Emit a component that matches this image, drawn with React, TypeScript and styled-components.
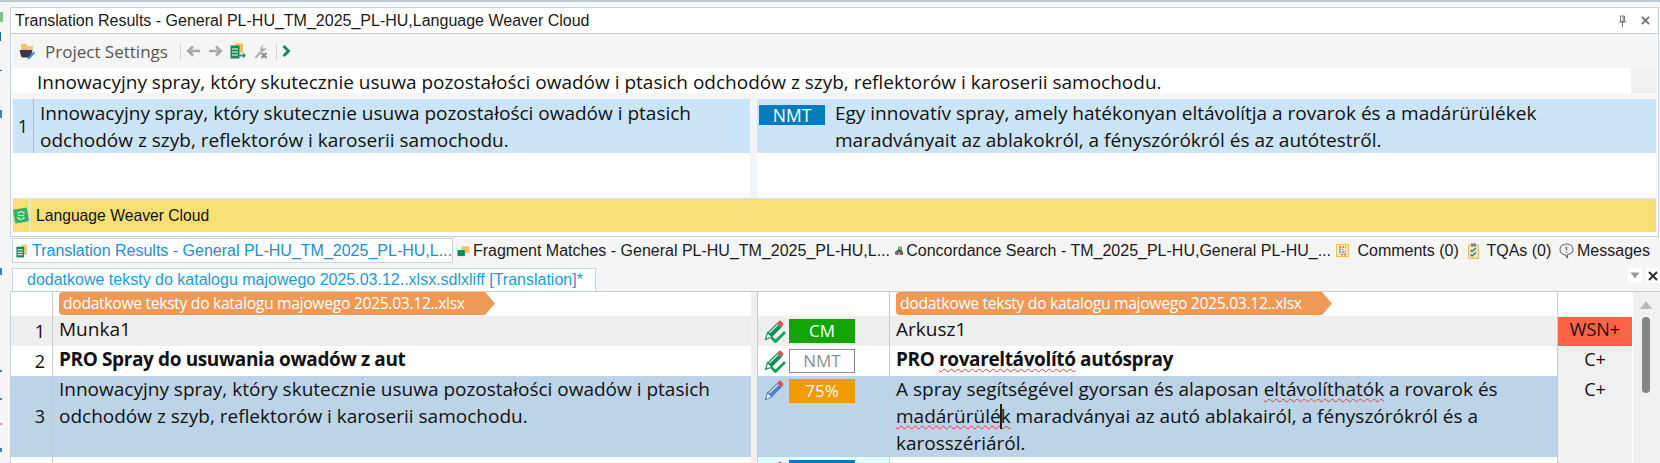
import React from "react";
import styled, { createGlobalStyle } from "styled-components";

const GlobalStyle = createGlobalStyle`
  html, body { margin: 0; padding: 0; background: #f5f5f5; }
  * { box-sizing: border-box; }
`;

const uiFont = `"Open Sans", "Noto Sans", sans-serif`;
const tabFont = `"Liberation Sans", Arial, sans-serif`;
const line = "#c6d3da";

const Page = styled.div`
  width: 1660px;
  height: 463px;
  overflow: hidden;
  display: flex;
  background: #f5f5f5;
  border-top: 2px solid #bcc9d3;
  color: #111;
`;

const Sliver = styled.div`
  width: 10px;
  flex: none;
`;

const Main = styled.div`
  width: 1650px;
  display: flex;
  flex-direction: column;
`;

/* ---------- top panel ---------- */
const Panel = styled.section`
  margin-top: 5px;
  width: 1649px;
  height: 230px;
  background: #fff;
  border: 1px solid ${line};
  display: flex;
  flex-direction: column;
`;

const TitleBar = styled.header`
  height: 26px;
  flex: none;
  display: flex;
  align-items: center;
  padding: 0 8px 0 4px;
  background: #fff;
  border-bottom: 1px solid ${line};
  font: 16px/1 ${tabFont};
  color: #1a1a1a;
`;

const TitleText = styled.span`
  flex: 1;
`;

const TitleButton = styled.span`
  display: flex;
  margin-left: 14px;
`;

const Toolbar = styled.div`
  height: 34px;
  flex: none;
  display: flex;
  align-items: center;
  padding-left: 7px;
  background: #f5f5f5;
  margin: 0 1px;
`;

const ToolLabel = styled.span`
  font: 17px/1 ${uiFont};
  color: #555;
  margin: 0 10px 0 10px;
`;

const ToolSep = styled.span`
  width: 1px;
  height: 17px;
  background: #d4d4d4;
  margin: 0 5px 0 2px;
`;

const ToolIcon = styled.span<{ $gap?: number }>`
  display: flex;
  margin-right: ${(p) => p.$gap ?? 7}px;
`;

const PanelBody = styled.div`
  margin: 0 1px;
  padding: 0 1px;
  flex: 1;
  display: flex;
  flex-direction: column;
  background: #f5f5f5;
`;

const SourceLine = styled.div`
  height: 25px;
  flex: none;
  display: flex;
  background: #f0f0f0;
  font: 19px/21px ${uiFont};
`;

const SourceText = styled.div`
  width: 1618px;
  padding: 4px 0 0 24px;
  background: #fff;
  white-space: nowrap;
`;

const ResultSpacer = styled.div`
  height: 6px;
  flex: none;
`;

const ResultRow = styled.div`
  height: 54px;
  flex: none;
  display: grid;
  grid-template-columns: 21px 716px 7px 1fr;
  background: #cce4f7;
  font: 19px/26.5px ${uiFont};
`;

const ResultNum = styled.div`
  display: flex;
  align-items: center;
  justify-content: center;
  font-size: 18px;
  border-right: 1px solid #a9b8c4;
`;

const ResultSource = styled.div`
  padding: 1px 0 0 6px;
  white-space: nowrap;
`;

const ResultGap = styled.div`
  background: #f2f4f6;
`;

const ResultTarget = styled.div`
  display: flex;
  padding: 1px 0 0 2px;
  white-space: nowrap;
`;

const NmtTag = styled.span`
  width: 66px;
  height: 20px;
  margin: 5px 10px 0 0;
  flex: none;
  background: #007cba;
  color: #fff;
  text-align: center;
  font-size: 17.5px;
  line-height: 20px;
`;

const ResultBlank = styled.div`
  height: 45px;
  flex: none;
  display: grid;
  grid-template-columns: 737px 7px 1fr;
  background: #fff;
`;

const ProviderBar = styled.div`
  height: 34px;
  flex: none;
  display: flex;
  align-items: center;
  background: #f7df75;
  border-top: 1px solid #d5e3f3;
  font: 15.7px/1 ${tabFont};
`;

const ProviderIcon = styled.span`
  width: 18px;
  height: 100%;
  display: flex;
  align-items: center;
  border-right: 2px solid #dfe5e8;
  margin-right: 5px;
`;

const PanelFoot = styled.div`
  flex: 1;
  background: #fff;
`;

/* ---------- tool tabs ---------- */
const ToolTabs = styled.nav`
  height: 25px;
  margin-top: 1px;
  flex: none;
  display: flex;
  padding-left: 2px;
  font: 16px/1 ${tabFont};
`;

const ToolTab = styled.div<{ $w: number; $active?: boolean }>`
  width: ${(p) => p.$w}px;
  flex: none;
  display: flex;
  align-items: center;
  gap: ${(p) => (p.$active ? 4 : 3)}px;
  padding-left: 3px;
  white-space: nowrap;
  color: ${(p) => (p.$active ? "#1e8ed0" : "#1a1a1a")};
  background: ${(p) => (p.$active ? "#fff" : "transparent")};
  border: 1px solid ${(p) => (p.$active ? line : "transparent")};
`;

/* ---------- document tab ---------- */
const DocBar = styled.div`
  height: 28px;
  flex: none;
  display: flex;
  align-items: flex-end;
  justify-content: space-between;
  padding-left: 2px;
`;

const DocTab = styled.div`
  width: 584px;
  height: 23px;
  background: #fff;
  border: 1px solid ${line};
  border-bottom: none;
  padding-left: 14px;
  font: 16px/21px ${tabFont};
  color: #1e9ad6;
  white-space: nowrap;
`;

const DocButtons = styled.div`
  display: flex;
  gap: 4px;
  align-self: flex-start;
  margin-top: 5px;
`;

const DocButton = styled.span`
  width: 14px;
  height: 15px;
  background: #fff;
  display: flex;
  align-items: center;
  justify-content: center;
`;

/* ---------- editor ---------- */
const Editor = styled.div`
  flex: 1;
  min-height: 0;
  display: flex;
  overflow: hidden;
  border-top: 1px solid #c5d0d8;
  border-left: 1px solid ${line};
`;

const Grid = styled.div`
  width: 1621px;
  flex: none;
  display: flex;
  flex-direction: column;
  background: #fff;
`;

const Row = styled.div<{ $h: number; $bg: string }>`
  height: ${(p) => p.$h}px;
  flex: none;
  display: grid;
  grid-template-columns: 42px 698px 7px 132px 668px 74px;
  background: ${(p) => p.$bg};
  font: 19px/27px ${uiFont};
`;

const NumCell = styled.div`
  display: flex;
  align-items: center;
  justify-content: flex-end;
  padding-right: 7px;
  font-size: 18px;
  border-right: 1px solid #c8cdd2;
`;

const TextCell = styled.div<{ $bold?: boolean }>`
  padding-left: 6px;
  white-space: nowrap;
  font-weight: ${(p) => (p.$bold ? 700 : 400)};
  letter-spacing: ${(p) => (p.$bold ? "-0.38px" : "0")};
`;

const TargetCell = styled(TextCell)`
  border-right: 1px solid #c8cdd2;
`;

const TagHolder = styled.div<{ $left: number; $ruled?: boolean }>`
  padding-left: ${(p) => p.$left}px;
  border-right: ${(p) => (p.$ruled ? "1px solid #c8cdd2" : "none")};
`;

const GapCell = styled.div`
  background: #f0f0f0;
  border-right: 1px solid #c8cdd2;
`;

const StatusCell = styled.div<{ $bg?: string }>`
  display: flex;
  align-items: flex-start;
  gap: 3px;
  padding: 3px 0 0 4px;
  border-right: 1px solid #c8cdd2;
  background: ${(p) => p.$bg ?? "transparent"};
`;

const Badge = styled.span<{ $bg: string; $fg: string; $border?: string }>`
  width: 66px;
  height: 24px;
  flex: none;
  background: ${(p) => p.$bg};
  color: ${(p) => p.$fg};
  border: ${(p) => (p.$border ? `1px solid ${p.$border}` : "none")};
  text-align: center;
  font-size: 17px;
  line-height: ${(p) => (p.$border ? 22 : 24)}px;
`;

const TmCell = styled.div<{ $hot?: boolean; $blank?: boolean }>`
  background: ${(p) => (p.$hot ? "#ff6347" : p.$blank ? "#fff" : "#efefef")};
  border-top: 1px solid ${(p) => (p.$hot ? "#efefef" : "transparent")};
  text-align: center;
  font-size: 18px;
  line-height: 25px;
`;

const Squiggle = styled.span`
  text-decoration: underline wavy #e0403a 1px;
  text-underline-offset: 2px;
`;

const Caret = styled.span`
  position: relative;
  &::after {
    content: "";
    position: absolute;
    left: -1px;
    top: 1px;
    width: 2px;
    height: 25px;
    background: #1c1c1c;
  }
`;

const ScrollRail = styled.div`
  flex: 1;
  background: #f0f0f0;
  border-left: 1px solid #fff;
  display: flex;
  flex-direction: column;
  align-items: center;
  padding: 9px 2px 0 0;
`;

const ScrollArrow = styled.span`
  width: 0;
  height: 0;
  border-left: 6px solid transparent;
  border-right: 6px solid transparent;
  border-bottom: 8px solid #b9b9b9;
`;

const ScrollThumb = styled.span`
  width: 8px;
  height: 76px;
  margin-top: 8px;
  border-radius: 4px;
  background: #858585;
`;

const Tag = styled.span<{ $w: number }>`
  display: block;
  width: ${(p) => p.$w}px;
  height: 23px;
  padding-left: 4px;
  background: #ee9a56;
  color: #fff;
  font: 15.7px/23px ${uiFont};
  letter-spacing: -0.32px;
  white-space: nowrap;
  border-radius: 4px 0 0 4px;
  clip-path: polygon(0 0, calc(100% - 10px) 0, 100% 50%, calc(100% - 10px) 100%, 0 100%);
`;

/* ---------- drawn icons ---------- */
const EdgeMarks = () => (
  <svg width="10" height="461" viewBox="0 0 10 461">
    <rect x="0" y="10" width="3" height="10" fill="#7fc08f" />
    <rect x="0" y="30" width="1" height="9" fill="#1b5fa8" />
    <rect x="0" y="68" width="2" height="1" fill="#1b5fa8" />
    <rect x="0" y="108" width="2" height="8" fill="#4a7fb8" />
    <rect x="0" y="266" width="2" height="7" fill="#4a7fb8" />
    <rect x="0" y="368" width="2" height="2" fill="#4a7fb8" />
    <rect x="0" y="396" width="2" height="2" fill="#4a7fb8" />
    <rect x="0" y="421" width="2" height="2" fill="#e58aa0" />
    <rect x="0" y="446" width="2" height="4" fill="#4a7fb8" />
  </svg>
);

const PencilIcon = ({ color, check }: { color: string; check?: boolean }) => (
  <svg width="24" height="24" viewBox="0 0 24 24">
    <path d="M5.5 13.5 L15 4 L19.5 8.5 L10 18 Z" fill={color} />
    <path d="M7.5 14 L16 5.5" stroke="#fff" strokeWidth="1.1" opacity="0.85" />
    <path d="M5.5 13.5 L10 18 L3.5 20.5 Z" fill="#fff" stroke={color} strokeWidth="1.1" strokeLinejoin="round" />
    <path d="M15 4 L17 2 Q18 1.2 19 2 L21 4.2 Q21.7 5.2 21 6 L19.5 8.5 Z" fill="#d9534f" />
    {check && <path d="M9.5 18.5 L13.5 22.5 L23 13" fill="none" stroke="#11a05a" strokeWidth="2.8" />}
  </svg>
);

const ProjectIcon = () => (
  <svg width="16" height="18" viewBox="0 0 16 18">
    <path d="M2 2 H7 L8.5 4 H14 V8 H2 Z" fill="#f2c66d" />
    <path d="M0.5 8 H13.5 L12 14 Q11.5 15.5 10 15.5 H4 Q2.5 15.5 2 14 Z" fill="#3b3b3b" />
    <path d="M9 15.5 L14.5 9.5 L16 11 L10.5 17 L8.5 17.5 Z" fill="#3f8fd8" />
  </svg>
);

const ArrowIcon = ({ flip }: { flip?: boolean }) => (
  <svg width="15" height="12" viewBox="0 0 15 12" style={flip ? { transform: "scaleX(-1)" } : undefined}>
    <path d="M14 6 H3 M7 1.5 L2.2 6 L7 10.5" fill="none" stroke="#a9a9a9" strokeWidth="2.6" />
  </svg>
);

const SheetIcon = () => (
  <svg width="16" height="16" viewBox="0 0 16 16">
    <rect x="5" y="0.5" width="8" height="9" fill="#efbe5d" />
    <rect x="0.5" y="2.5" width="9" height="13" fill="#12895a" />
    <path d="M2 6 H8 M2 9 H8 M2 12 H8" stroke="#fff" strokeWidth="1.2" />
    <path d="M9 11.5 H13 V9.5 L16 12.5 L13 15.5 V13.5 H9 Z" fill="#3f7fc0" />
  </svg>
);

const WrenchIcon = () => (
  <svg width="15" height="16" viewBox="0 0 15 16">
    <path d="M1.5 14.5 L7.5 7.5 Q6.8 3 11 1.5 L9 4.5 L11 6 L13.5 3.8 Q13 8 9 8.8 L3.5 15.5 Z" fill="#b0b0b0" />
    <path d="M8.5 10 L13.5 15 M13.5 10 L8.5 15" stroke="#8a8a8a" strokeWidth="2" />
  </svg>
);

const ChevronIcon = () => (
  <svg width="9" height="12" viewBox="0 0 9 12">
    <path d="M1.5 1 L6.5 6 L1.5 11" fill="none" stroke="#0f8a5f" strokeWidth="2.8" />
  </svg>
);

const PinIcon = () => (
  <svg width="9" height="12" viewBox="0 0 9 12">
    <path d="M2.5 1 H6.5 V6.5 H2.5 Z M1 7 H8 M4.5 7 V12 M5.2 1 V6.5" fill="none" stroke="#777" strokeWidth="1" />
  </svg>
);

const CloseIcon = ({ color, size }: { color: string; size: number }) => (
  <svg width={size} height={size} viewBox="0 0 10 10">
    <path d="M1 1 L9 9 M9 1 L1 9" stroke={color} strokeWidth="2.2" />
  </svg>
);

const DownIcon = () => (
  <svg width="10" height="7" viewBox="0 0 10 7">
    <path d="M0.5 0.5 H9.5 L5 6.5 Z" fill="#9a9a9a" />
  </svg>
);

const WeaverIcon = () => (
  <svg width="16" height="17" viewBox="0 0 16 17">
    <rect x="1" y="1.5" width="14" height="14" rx="1.5" fill="#35b267" transform="rotate(-10 8 8.5)" />
    <path d="M4.5 7 A4 4 0 0 1 11.5 6.5 M11.5 10 A4 4 0 0 1 4.5 10.5" fill="none" stroke="#c8ecd4" strokeWidth="1.4" />
    <path d="M5 8.5 H11" stroke="#c8ecd4" strokeWidth="1.2" />
  </svg>
);

const ResultsIcon = () => (
  <svg width="14" height="16" viewBox="0 0 14 16">
    <rect x="6" y="0.5" width="7" height="12" fill="#eecb85" />
    <rect x="0.5" y="3" width="9" height="12.5" fill="#12895a" />
    <path d="M2 6.5 H8 M2 9.5 H8 M2 12.5 H8" stroke="#fff" strokeWidth="1.2" />
  </svg>
);

const FragmentIcon = () => (
  <svg width="14" height="14" viewBox="0 0 14 14">
    <rect x="5" y="2" width="8.5" height="7" fill="#f0c465" />
    <rect x="0.5" y="6" width="8" height="6.5" fill="#12895a" />
  </svg>
);

const BinocularIcon = () => (
  <svg width="15" height="16" viewBox="0 0 15 16">
    <rect x="5.5" y="0" width="7" height="8" fill="#2f9c5f" />
    <rect x="7.5" y="1" width="3" height="3" fill="#f0d27a" />
    <circle cx="3.6" cy="11.8" r="3.6" fill="#4c4c4c" />
    <circle cx="11.4" cy="11.8" r="3.6" fill="#4c4c4c" />
    <path d="M1 10 L3.5 6 H11.5 L14 10 Z" fill="#5c5c5c" />
    <circle cx="3.6" cy="11.8" r="1.4" fill="#aaa" />
    <circle cx="11.4" cy="11.8" r="1.4" fill="#aaa" />
  </svg>
);

const CommentsIcon = () => (
  <svg width="14" height="14" viewBox="0 0 14 14">
    <rect x="0.5" y="0.5" width="12" height="12" fill="#f7e6bd" stroke="#e2bd72" />
    <path d="M3 3 H10 M3 5.5 H7 M3 8 H10 M5 10.5 H10" stroke="#8c8c8c" strokeWidth="1.3" strokeDasharray="2 1" />
  </svg>
);

const ClipboardIcon = () => (
  <svg width="11" height="16" viewBox="0 0 11 16">
    <rect x="0.5" y="2" width="10" height="13.5" fill="#f6e1b3" stroke="#e2bd72" />
    <rect x="3" y="0.5" width="5" height="3" fill="#7f7f7f" />
    <path d="M2.5 7 L4 8.5 L8 5 M2.5 11.5 L4 13 L8 9.5" fill="none" stroke="#2f78c4" strokeWidth="1.3" />
  </svg>
);

const MessageIcon = () => (
  <svg width="15" height="16" viewBox="0 0 15 16">
    <path d="M7.5 1 C3.5 1 1 3.5 1 6.5 C1 9.5 3.5 11.5 6 11.8 L8.5 14.5 V11.7 C11.5 11 14 9.5 14 6.5 C14 3.5 11.5 1 7.5 1 Z" fill="none" stroke="#666" strokeWidth="1.1" />
    <path d="M7.5 3.5 V7.5 M7.5 8.7 V10" stroke="#666" strokeWidth="1.4" />
  </svg>
);

const docName = "dodatkowe teksty do katalogu majowego 2025.03.12..xlsx";

export default function App() {
  return (
    <Page>
      <GlobalStyle />
      <Sliver>
        <EdgeMarks />
      </Sliver>
      <Main>
        <Panel>
          <TitleBar>
            <TitleText>Translation Results - General PL-HU_TM_2025_PL-HU,Language Weaver Cloud</TitleText>
            <TitleButton><PinIcon /></TitleButton>
            <TitleButton><CloseIcon color="#777" size={9} /></TitleButton>
          </TitleBar>
          <Toolbar>
            <ProjectIcon />
            <ToolLabel>Project Settings</ToolLabel>
            <ToolSep />
            <ToolIcon><ArrowIcon /></ToolIcon>
            <ToolIcon><ArrowIcon flip /></ToolIcon>
            <ToolIcon><SheetIcon /></ToolIcon>
            <ToolIcon $gap={6}><WrenchIcon /></ToolIcon>
            <ToolSep />
            <ToolIcon><ChevronIcon /></ToolIcon>
          </Toolbar>
          <PanelBody>
            <SourceLine>
              <SourceText>
                Innowacyjny spray, który skutecznie usuwa pozostałości owadów i ptasich odchodów z szyb, reflektorów i karoserii samochodu.
              </SourceText>
            </SourceLine>
            <ResultSpacer />
            <ResultRow>
              <ResultNum>1</ResultNum>
              <ResultSource>
                Innowacyjny spray, który skutecznie usuwa pozostałości owadów i ptasich
                <br />
                odchodów z szyb, reflektorów i karoserii samochodu.
              </ResultSource>
              <ResultGap />
              <ResultTarget>
                <NmtTag>NMT</NmtTag>
                <span>
                  Egy innovatív spray, amely hatékonyan eltávolítja a rovarok és a madárürülékek
                  <br />
                  maradványait az ablakokról, a fényszórókról és az autótestről.
                </span>
              </ResultTarget>
            </ResultRow>
            <ResultBlank>
              <div />
              <ResultGap />
              <div />
            </ResultBlank>
            <ProviderBar>
              <ProviderIcon><WeaverIcon /></ProviderIcon>
              Language Weaver Cloud
            </ProviderBar>
            <PanelFoot />
          </PanelBody>
        </Panel>
        <ToolTabs>
          <ToolTab $w={441} $active>
            <ResultsIcon />
            Translation Results - General PL-HU_TM_2025_PL-HU,L...
          </ToolTab>
          <ToolTab $w={438}>
            <FragmentIcon />
            Fragment Matches - General PL-HU_TM_2025_PL-HU,L...
          </ToolTab>
          <ToolTab $w={441}>
            <BinocularIcon />
            Concordance Search - TM_2025_PL-HU,General PL-HU_...
          </ToolTab>
          <ToolTab $w={132}>
            <CommentsIcon />
            &nbsp;Comments (0)
          </ToolTab>
          <ToolTab $w={91}>
            <ClipboardIcon />
            &nbsp;TQAs (0)
          </ToolTab>
          <ToolTab $w={96}>
            <MessageIcon />
            Messages
          </ToolTab>
        </ToolTabs>
        <DocBar>
          <DocTab>dodatkowe teksty do katalogu majowego 2025.03.12..xlsx.sdlxliff [Translation]*</DocTab>
          <DocButtons>
            <DocButton><DownIcon /></DocButton>
            <DocButton><CloseIcon color="#333" size={10} /></DocButton>
          </DocButtons>
        </DocBar>
        <Editor>
          <Grid>
            <Row $h={24} $bg="#fff">
              <NumCell />
              <TagHolder $left={6}><Tag $w={436}>{docName}</Tag></TagHolder>
              <GapCell />
              <StatusCell />
              <TagHolder $left={6} $ruled><Tag $w={436}>{docName}</Tag></TagHolder>
              <TmCell $blank />
            </Row>
            <Row $h={30} $bg="#eeeeee">
              <NumCell>1</NumCell>
              <TextCell>Munka1</TextCell>
              <GapCell />
              <StatusCell>
                <PencilIcon color="#11905a" check />
                <Badge $bg="#12a500" $fg="#fff">CM</Badge>
              </StatusCell>
              <TargetCell>Arkusz1</TargetCell>
              <TmCell $hot>WSN+</TmCell>
            </Row>
            <Row $h={30} $bg="#fff">
              <NumCell>2</NumCell>
              <TextCell $bold>PRO Spray do usuwania owadów z aut</TextCell>
              <GapCell />
              <StatusCell>
                <PencilIcon color="#11905a" check />
                <Badge $bg="#fff" $fg="#8a8f99" $border="#8c8c8c">NMT</Badge>
              </StatusCell>
              <TargetCell $bold>PRO <Squiggle>rovareltávolító</Squiggle> autóspray</TargetCell>
              <TmCell>C+</TmCell>
            </Row>
            <Row $h={81} $bg="#bdd4e8">
              <NumCell>3</NumCell>
              <TextCell>
                Innowacyjny spray, który skutecznie usuwa pozostałości owadów i ptasich
                <br />
                odchodów z szyb, reflektorów i karoserii samochodu.
              </TextCell>
              <GapCell />
              <StatusCell>
                <PencilIcon color="#4f86c6" />
                <Badge $bg="#f29b00" $fg="#fff">75%</Badge>
              </StatusCell>
              <TargetCell>
                A spray segítségével gyorsan és alaposan <Squiggle>eltávolíthatók</Squiggle> a rovarok és
                <br />
                <Squiggle>madárürülé<Caret />k</Squiggle> maradványai az autó ablakairól, a fényszórókról és a
                <br />
                karosszériáról.
              </TargetCell>
              <TmCell>C+</TmCell>
            </Row>
            <Row $h={30} $bg="#fff">
              <NumCell />
              <TextCell>Dzięki specjalnej formule skutecznie rozpuszcza zabrudzenia na karoserii</TextCell>
              <GapCell />
              <StatusCell $bg="#e0ffff">
                <PencilIcon color="#4f86c6" />
                <Badge $bg="#007cba" $fg="#fff" />
              </StatusCell>
              <TargetCell>Egyedülálló képletének köszönhetően hatékonyan oldja a szennyeződéseket</TargetCell>
              <TmCell />
            </Row>
          </Grid>
          <ScrollRail>
            <ScrollArrow />
            <ScrollThumb />
          </ScrollRail>
        </Editor>
      </Main>
    </Page>
  );
}
